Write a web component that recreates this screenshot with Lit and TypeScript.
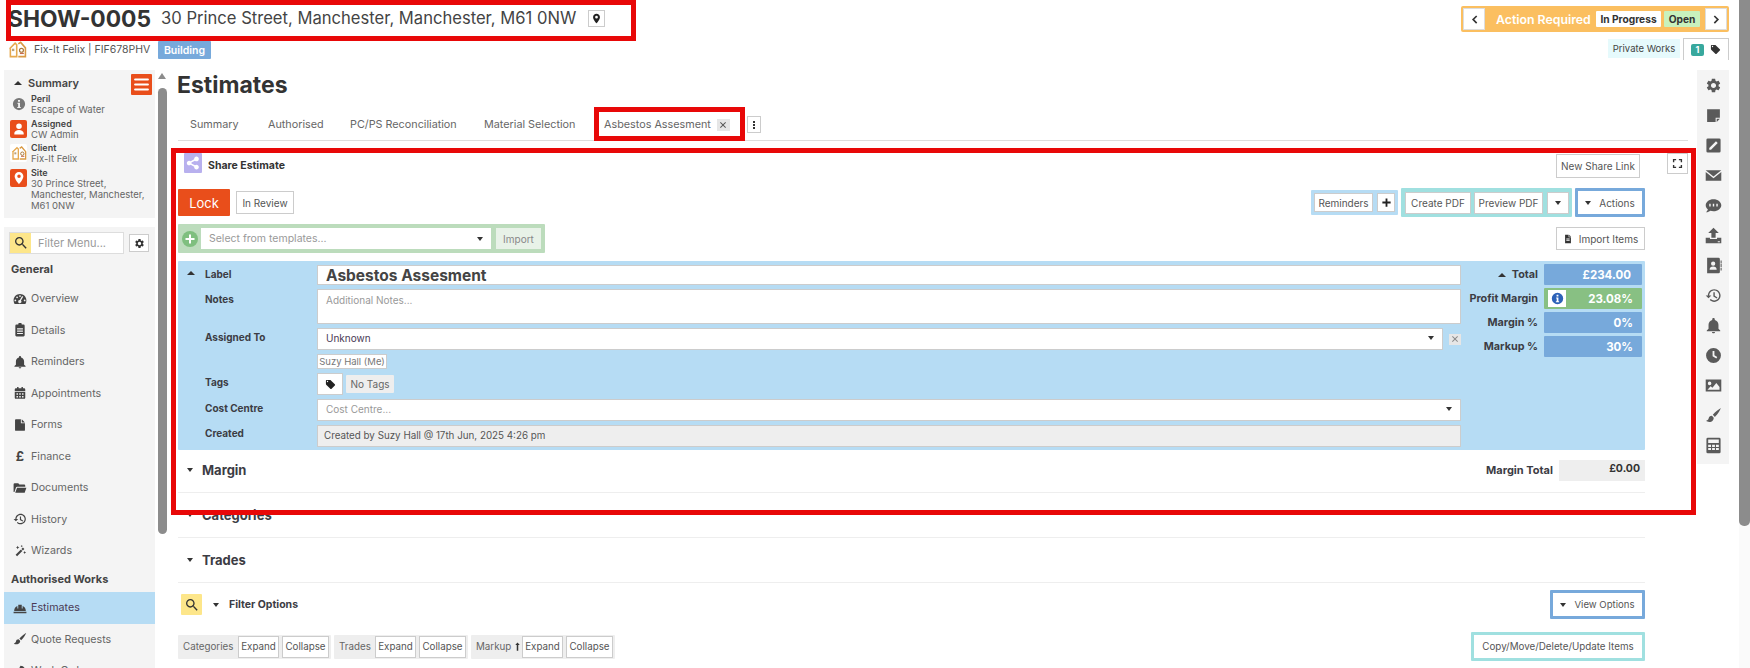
import { LitElement, html, css } from "lit";
import { customElement } from "lit/decorators.js";

const P: Record<string, string> = {
  gear: "M19.14 12.94c.04-.3.06-.61.06-.94 0-.32-.02-.64-.07-.94l2.03-1.58c.18-.14.23-.41.12-.61l-1.92-3.32c-.12-.22-.37-.29-.59-.22l-2.39.96c-.5-.38-1.03-.7-1.62-.94l-.36-2.54c-.04-.24-.24-.41-.48-.41h-3.84c-.24 0-.43.17-.47.41l-.36 2.54c-.59.24-1.13.57-1.62.94l-2.39-.96c-.22-.08-.47 0-.59.22L2.74 8.87c-.12.21-.08.47.12.61l2.03 1.58c-.05.3-.09.63-.09.94s.02.64.07.94l-2.03 1.58c-.18.14-.23.41-.12.61l1.92 3.32c.12.22.37.29.59.22l2.39-.96c.5.38 1.03.7 1.62.94l.36 2.54c.05.24.24.41.48.41h3.84c.24 0 .44-.17.47-.41l.36-2.54c.59-.24 1.13-.56 1.62-.94l2.39.96c.22.08.47 0 .59-.22l1.92-3.32c.12-.22.07-.47-.12-.61l-2.01-1.58zM12 15.6c-1.98 0-3.6-1.62-3.6-3.6s1.62-3.6 3.6-3.6 3.6 1.62 3.6 3.6-1.62 3.6-3.6 3.6z",
  search: "M15.5 14h-.79l-.28-.27C15.41 12.59 16 11.11 16 9.5 16 5.91 13.09 3 9.5 3S3 5.91 3 9.5 5.91 16 9.5 16c1.61 0 3.09-.59 4.23-1.57l.27.28v.79l5 4.99L20.49 19l-4.99-5zm-6 0C7.01 14 5 11.99 5 9.5S7.01 5 9.5 5 14 7.01 14 9.5 11.99 14 9.5 14z",
  bell: "M12 23c1.2 0 2.2-.9 2.2-2h-4.4c0 1.1 1 2 2.2 2zm7-6.5V11c0-3.4-2-6.2-5.2-6.9V3.3c0-1-.8-1.8-1.8-1.8s-1.8.8-1.8 1.8v.8C7 4.8 5 7.6 5 11v5.5L2.5 19v1h19v-1L19 16.5z",
  history: "M13 3c-4.97 0-9 4.03-9 9H1l3.89 3.89.07.14L9 12H6c0-3.87 3.13-7 7-7s7 3.13 7 7-3.13 7-7 7c-1.93 0-3.68-.79-4.94-2.06l-1.42 1.42C8.27 19.99 10.51 21 13 21c4.97 0 9-4.03 9-9s-4.03-9-9-9zm-1.2 4.5v6l4.8 2.9 1-1.6-3.8-2.3v-5z",
  folder: "M1 6a2 2 0 0 1 2-2h6l2 2h8a2 2 0 0 1 2 2v2H7a2 2 0 0 0-1.9 1.3L2.5 19H1zM7 11.5h16L20 20H3.8z",
  file: "M13.5 2H5a1.5 1.5 0 0 0-1.5 1.5v17A1.5 1.5 0 0 0 5 22h14a1.5 1.5 0 0 0 1.5-1.5V9h-7zM15 2v5.5h5.5z",
  cal: "M7 1.5h2.5V4h5V1.5H17V4h2a2 2 0 0 1 2 2v2.5H3V6a2 2 0 0 1 2-2h2zM3 10h18v10a2 2 0 0 1-2 2H5a2 2 0 0 1-2-2zm3 2.5V15h2.5v-2.5zm4.7 0V15h2.6v-2.5zm4.8 0V15H18v-2.5zM6 17v2.5h2.5V17zm4.7 0v2.5h2.6V17zm4.8 0v2.5H18V17z",
  clip: "M9 2.5a3 3 0 0 1 6 0h3a2 2 0 0 1 2 2V21a2 2 0 0 1-2 2H6a2 2 0 0 1-2-2V4.500a2 2 0 0 1 2-2zM7 9v2h10V9zm0 4v2h10v-2zm0 4v2h10v-2z",
  gauge: "M12 3.500C5.900 3.500 1 8.400 1 14.500c0 2.200.6 4.200 1.700 6h18.600c1.100-1.800 1.700-3.800 1.700-6 0-6.100-4.900-11-11-11zM4 13a1.500 1.500 0 1 1 0 3 1.500 1.500 0 0 1 0-3zM7 7.500a1.500 1.500 0 1 1 0 3 1.500 1.500 0 0 1 0-3zM12 5.500a1.500 1.500 0 1 1 0 3 1.500 1.500 0 0 1 0-3zM20 13a1.500 1.500 0 1 1 0 3 1.500 1.500 0 0 1 0-3zM17.500 8l-3.800 6.500a2.800 2.800 0 1 1-2-.9l3.900-6.600z",
  wand: "M17 6l2.500 2.500L7 21l-2.500-2.500zM13.500 9.500l2.500 2.500 1-1-2.500-2.500zM8 3l1 2 2 1-2 1-1 2-1-2-2-1 2-1zM20 12l.8 1.700 1.700.8-1.700.8-.8 1.700-.8-1.700-1.700-.8 1.700-.8zM15 1.500l.7 1.300 1.300.7-1.300.7-.7 1.300-.7-1.300-1.300-.7 1.300-.7z",
  hat: "M2 17c0-4 2.200-7 5.500-8.300V13H9V6.500h6V13h1.500V8.700C19.800 10 22 13 22 17zM1 18.500h22V21H1z",
  brush: "M22.500 1.500c-2 1-8 5.500-11.500 9.500l3 3c4-3.500 7.500-10 8.500-12.500zM9.700 12.500C7 12.500 5.500 14 5 16.500c-.3 1.500-2 2.500-3.500 3 2 2 7 2.500 9.500-.5 1.500-1.800 1.500-3.500.8-4.500z",
  hammer: "M13 3l4 1 4 4-2.500 2.500L17 9l-1.500 1.500L5 21l-2-2L13.500 8.500 11 6z",
  note: "M3 3h18v12h-6v6H3zM16.500 16.500V21l4.500-4.500z",
  edit: "M4 2h16a2 2 0 0 1 2 2v16a2 2 0 0 1-2 2H4a2 2 0 0 1-2-2V4a2 2 0 0 1 2-2zm11.500 4L6 15.500V18h2.500L18 8.500zM7 16",
  mail: "M1 4.500h22L12 13.500zM1 7l11 9 11-9v12.500H1z",
  sms: "M12 3C5.900 3 1 6.800 1 11.500c0 2.300 1.200 4.400 3 5.900-.2 1.400-1.200 3-2.500 4.100 2.500 0 4.700-1 6-2.200 1.300.4 2.900.7 4.500.7 6.100 0 11-3.800 11-8.500S18.100 3 12 3zM6 9.500h2v4H6zm5 0h2v4h-2zm5 0h2v4h-2z",
  upload: "M12 1l7.500 7.500H15V15H9V8.500H4.500zM1 15h6v2h10v-2h6v8H1zm17 5v1.500h3V20z",
  contact: "M3 1h16a2 2 0 0 1 2 2v18a2 2 0 0 1-2 2H3zm8.500 5.500a3 3 0 1 0 0 6 3 3 0 0 0 0-6zM6.500 18h10c0-2.800-2-4.500-5-4.500s-5 1.700-5 4.500zM22 5h1.500v4H22zm0 5h1.500v4H22zm0 5h1.500v4H22z",
  clock: "M12 1.500a10.500 10.500 0 1 0 0 21 10.500 10.500 0 0 0 0-21zM10.700 5.500h2.600v6l4 2.500-1.300 2.200-5.300-3.200z",
  image: "M1 3.500h22v17H1zM6.500 6.500a2.500 2.500 0 1 0 0 5 2.500 2.500 0 0 0 0-5zM3.500 18h17v-4L16 8.500 10.500 15 8 13z",
  calc: "M4 1h16a2 2 0 0 1 2 2v18a2 2 0 0 1-2 2H4a2 2 0 0 1-2-2V3a2 2 0 0 1 2-2zm.500 2.500v5h15v-5zm0 7.500v3h4v-3zm5.500 0v3h4v-3zm5.500 0v3h4v-3zm-11 4.500v3h4v-3zm5.500 0v3h4v-3zm5.500 0v3h4v-3z",
  person: "M12 2.500a4.800 4.800 0 1 0 0 9.600 4.800 4.800 0 0 0 0-9.600zM12 13.500c-4.400 0-8 2.400-8 5.500v2.500h16V19c0-3.100-3.600-5.500-8-5.500z",
  place: "M12 1.500C7.900 1.500 4.500 4.900 4.500 9c0 5.500 7.500 13.500 7.500 13.500S19.500 14.500 19.500 9c0-4.100-3.400-7.500-7.500-7.500zM12 6a3 3 0 1 1 0 6 3 3 0 0 1 0-6z",
  share: "M18 15c-1 0-1.900.4-2.600 1L9.300 12.700c.1-.2.100-.5.100-.7s0-.5-.1-.7L15.400 8c.7.6 1.600 1 2.600 1 2.200 0 4-1.800 4-4s-1.800-4-4-4-4 1.800-4 4c0 .2 0 .5.100.7L8 9c-.7-.6-1.600-1-2.600-1-2.200 0-4 1.800-4 4s1.800 4 4 4c1 0 1.900-.4 2.600-1l6.100 3.300c-.1.200-.1.500-.1.700 0 2.200 1.800 4 4 4s4-1.800 4-4-1.800-4-4-4z",
  tag: "M21.410 11.580l-9-9C12.050 2.220 11.550 2 11 2H4c-1.100 0-2 .9-2 2v7c0 .55.22 1.050.59 1.420l9 9c.36.36.86.58 1.410.58.55 0 1.050-.22 1.410-.59l7-7c.37-.36.59-.86.59-1.410 0-.55-.23-1.060-.59-1.420zM5.500 7C4.670 7 4 6.330 4 5.500S4.670 4 5.500 4 7 4.670 7 5.500 6.330 7 5.500 7z",
  info: "M12 1.500a10.500 10.500 0 1 0 0 21 10.500 10.500 0 0 0 0-21zM10.300 5h3.400v3.200h-3.400zM9.500 10h4.200v7h1.300v2H9v-2h1.500v-5h-1z",
  plus: "M10 3h4v7h7v4h-7v7h-4v-7H3v-4h7z",
  x: "M5 3l7 7 7-7 2 2-7 7 7 7-2 2-7-7-7 7-2-2 7-7-7-7z",
  expand: "M2 2h7v3H5v4H2zM15 2h7v7h-3V5h-4zM2 15h3v4h4v3H2zM19 15h3v7h-7v-3h4z",
  left: "M15.500 3L18 5.500 11.500 12l6.500 6.500-2.500 2.500-9-9z",
  right: "M8.500 3L6 5.500 12.500 12 6 18.500 8.500 21l9-9z",
  menu: "M3 3.500h18a1.500 1.500 0 0 1 0 3H3a1.500 1.500 0 0 1 0-3zM3 10.500h18a1.500 1.500 0 0 1 0 3H3a1.500 1.500 0 0 1 0-3zM3 17.500h18a1.500 1.500 0 0 1 0 3H3a1.500 1.500 0 0 1 0-3z",
  uparrow: "M12 1l6 7h-4v15h-4V8H6z",
  pdf: "M13.500 2H5v20h14V8h-5.500zM15 2v4.500h4.500zM8 11h8v2H8zm0 4h8v2H8z",
};

const icon = (n: string, cls = "") =>
  html`<svg class="i ${cls}" viewBox="0 0 24 24"><path fill-rule="evenodd" d=${P[n]}></path></svg>`;

const logo = (cls: string) => html`<svg class=${cls} viewBox="0 0 24 24" fill="none">
  <path d="M2 11 9 4l2 2v15H3V11" stroke="#e6a94e" stroke-width="2"></path>
  <path d="M13 5l3-2 6 7v11h-9" stroke="#d99a45" stroke-width="2"></path>
  <rect x="5" y="11" width="3" height="3" fill="#b9a27a"></rect>
  <circle cx="17" cy="13" r="2.500" stroke="#a9793a" stroke-width="1.500"></circle>
  <path d="M15 17h5" stroke="#c9694a" stroke-width="1.500"></path>
</svg>`;

@customElement("app-root")
export class AppRoot extends LitElement {
  static styles = css`
    :host { display: block; }
    * { box-sizing: border-box; }
    .page { position: relative; display: flex; width: 1750px; height: 668px; overflow: hidden; background: #fff;
      font-family: Inter, "Liberation Sans", sans-serif; font-size: 10.500px; color: #444; }
    .i { display: block; fill: currentColor; flex: none; }
    .content { width: 1739px; height: 668px; flex: none; display: flex; flex-direction: column; }
    .pagebar { width: 11px; height: 668px; background: #fafafa; }
    .pagebar div { height: 526px; background: #8c8c8c; border-radius: 0 0 5px 5px; }

    /* header */
    .top { height: 70px; flex: none; }
    .r1 { height: 36px; display: flex; align-items: center; justify-content: space-between; padding: 0 10px 0 8px; }
    .tleft { display: flex; align-items: center; }
    .code { font-size: 22.800px; font-weight: 700; color: #333; width: 153px; white-space: nowrap; }
    .addr { font-size: 16.600px; color: #444; width: 427px; white-space: nowrap; }
    .pin { width: 17px; height: 17px; border: 1px solid #ccc; display: flex; align-items: center; justify-content: center; color: #222; }
    .pin .i { width: 11px; height: 11px; }
    .action { width: 268px; height: 26px; background: #fbbf60; border-radius: 2px; display: flex; align-items: center; padding: 0 2px; margin-top: 2px; }
    .abtn { width: 22px; height: 22px; background: #fff; border: 1px solid #ddd; display: flex; align-items: center; justify-content: center; color: #333; flex: none; }
    .abtn .i { width: 11px; height: 11px; }
    .atitle { color: #fff; font-size: 12.300px; font-weight: 600; margin-left: 11px; white-space: nowrap; flex: none; width: 100px; }
    .ap { background: #fff; height: 16px; width: 65px; margin-right: 3px; font-weight: 700; color: #333; font-size: 10.200px; display: flex; align-items: center; justify-content: center; border-radius: 1px; flex: none; }
    .ao { background: #c8f1bd; width: 36px; margin-right: 5px; }
    .r2 { height: 26px; display: flex; justify-content: space-between; padding: 2px 10px 0 8px; }
    .client { display: flex; align-items: flex-start; }
    .clogo { width: 19px; height: 19px; margin-top: 2px; }
    .cname { width: 124px; margin-left: 7px; font-size: 10.500px; color: #555; margin-top: 5px; white-space: nowrap; }
    .bld { width: 53px; height: 18px; margin-top: 3px; background: #77a9db; color: #fff; font-weight: 600; font-size: 10.500px; display: flex; align-items: center; justify-content: center; border-radius: 1px; }
    .rt { display: flex; align-items: flex-start; }
    .pw { width: 72px; height: 19px; margin-top: 1px; background: #e6fafc; color: #444; font-size: 9.500px; display: flex; align-items: center; justify-content: center; margin-right: 3px; white-space: nowrap; }
    .ttab { width: 46px; height: 22px; border: 1px solid #ccc; border-bottom: 0; display: flex; align-items: center; justify-content: center; gap: 6px; color: #333; }
    .ttab .i { width: 11px; height: 11px; }
    .badge { width: 13px; height: 12px; background: #38a89d; color: #fff; font-size: 9px; font-weight: 700; display: flex; align-items: center; justify-content: center; border-radius: 2px; }

    .body { flex: 1; display: flex; min-height: 0; }

    /* left sidebar */
    .left { width: 155px; flex: none; padding-left: 4px; display: flex; flex-direction: column; gap: 9px; }
    .sum { height: 148px; background: #f4f4f4; position: relative; padding: 6px 0 0 6px; flex: none; }
    .sumh { display: flex; align-items: center; height: 14px; font-weight: 600; font-size: 11px; color: #444; }
    .sumh .up { margin: 0 6px 0 4px; }
    .hamb { position: absolute; right: 3px; top: 4px; width: 21px; height: 21px; background: #e94e1b; color: #fff; border-radius: 1px; display: flex; align-items: center; justify-content: center; }
    .hamb .i { width: 17px; height: 17px; }
    .sitem { display: flex; align-items: flex-start; margin-bottom: 2.500px; line-height: 11px; }
    .sitems { margin-top: 3px; }
    .sic { width: 17px; height: 18px; margin: 2px 4px 0 0; flex: none; border-radius: 2px; display: flex; align-items: center; justify-content: center; color: #fff; background: #e94e1b; }
    .sic .i { width: 14px; height: 14px; }
    .sic.plain { background: none; color: #777; }
    .sic.white { background: #fff; }
    .sic svg.lg { width: 16px; height: 16px; }
    .st { font-size: 9.500px; color: #666; white-space: nowrap; }
    .st b { display: block; color: #444; font-weight: 600; font-size: 9px; }
    .st span { display: block; line-height: 11px; }
    .menu { flex: 1; background: #f4f4f4; padding-top: 5px; min-height: 0; }
    .srow { height: 22px; display: flex; padding-left: 5px; align-items: center; }
    .sbox { width: 115px; height: 22px; border: 1px solid #ddd; background: #fff; display: flex; align-items: center; color: #999; font-size: 11px; }
    .sy { width: 21px; height: 20px; background: #fde68a; display: flex; align-items: center; justify-content: center; color: #333; margin-right: 7px; }
    .sy .i { width: 16px; height: 16px; }
    .sg { width: 20px; height: 18px; margin-left: 5px; background: #fff; border: 1px solid #ccc; display: flex; align-items: center; justify-content: center; color: #333; }
    .sg .i { width: 11px; height: 11px; }
    .mh { font-weight: 700; color: #444; font-size: 11px; padding-left: 7px; display: flex; align-items: center; white-space: nowrap; }
    .mh.a { height: 29px; }
    .mh.b { height: 25.500px; }
    .mi { height: 31.500px; display: flex; align-items: center; padding-left: 9px; color: #666; font-size: 10.700px; white-space: nowrap; }
    .mi .mic { width: 14px; height: 14px; margin-right: 4px; color: #444; flex: none; display: flex; align-items: center; justify-content: center; font-weight: 700; font-size: 13px; }
    .mi .mic .i { width: 14px; height: 14px; }
    .mi.on { background: #b6dcf4; color: #4a3a55; }

    .sb { width: 12px; flex: none; padding-left: 3px; }
    .sb .arrow { width: 0; height: 0; border: 4.500px solid transparent; border-top: 0; border-bottom: 6px solid #8c8c8c; margin-top: 3px; }
    .sb .th { width: 9px; height: 446px; margin-top: 9px; background: #8c8c8c; border-radius: 5px; }

    /* main */
    main { width: 1530px; flex: none; padding: 0 9px 0 11px; }
    h1 { margin: 0 0 0 -1px; height: 30px; font-size: 23px; font-weight: 700; color: #333; display: flex; align-items: center; }
    .tabs { height: 41px; padding-top: 8px; border-bottom: 1px solid #ddd; display: grid; grid-template-columns: 78px 82px 134px 120px 152px 20px; align-items: center; font-size: 10.800px; color: #666; }
    .tabs > div { padding-left: 12px; white-space: nowrap; }
    .tabs .cur { display: flex; align-items: center; height: 33px; }
    .tabx { width: 13px; height: 12px; margin-left: 6px; background: #e6e6e6; display: flex; align-items: center; justify-content: center; color: #555; }
    .tabx .i { width: 8px; height: 8px; }
    .tabs .more { width: 14px; height: 17px; padding: 0; margin-left: 3px; border: 1px solid #ccc; display: flex; flex-direction: column; align-items: center; justify-content: center; gap: 1px; }
    .more span { width: 2px; height: 2px; background: #333; }
    .inner { width: 1467px; }
    .sr { margin-top: 12px; height: 24px; display: flex; align-items: flex-start; position: relative; }
    .shic { width: 18px; height: 20px; margin: 0 6px; background: #b8b0ee; border-radius: 1px; display: flex; align-items: center; justify-content: center; color: #fff; }
    .shic .i { width: 14px; height: 14px; }
    .srt { font-weight: 700; color: #333; font-size: 10.500px; margin-top: 6px; flex: 1; }
    .btn { background: #fff; border: 1px solid #ccc; display: flex; align-items: center; justify-content: center; color: #555; font-size: 10px; white-space: nowrap; flex: none; }
    .nsl { width: 84px; height: 24px; margin: 1px 5px 0 0; }
    .fs { position: absolute; left: 1489px; top: 0; width: 21px; height: 21px; color: #333; }
    .fs .i { width: 11px; height: 11px; }
    .ar { margin-top: 11px; height: 29px; display: flex; align-items: center; }
    .lock { width: 52px; height: 27px; background: #e94e1b; color: #fff; font-size: 13px; font-weight: 400; display: flex; align-items: center; justify-content: center; border-radius: 1px; margin-right: 6px; }
    .rev { width: 58px; height: 23px; }
    .gap { flex: 1; }
    .g { display: flex; align-items: center; border-radius: 1px; }
    .g1 { width: 87px; height: 25px; background: #b6dcf4; padding-left: 3px; margin-right: 3px; gap: 4px; }
    .g1 .a { width: 59px; height: 19px; }
    .g1 .b { width: 18px; height: 19px; color: #222; }
    .g1 .b .i { width: 11px; height: 11px; }
    .g2 { width: 171px; height: 29px; background: #a0e0e0; padding-left: 4px; margin-right: 3px; }
    .g2 .a { width: 66px; height: 22px; margin-right: 3px; }
    .g2 .b { width: 69px; height: 22px; margin-right: 4px; }
    .g2 .c { width: 22px; height: 22px; }
    .g3 { width: 70px; height: 29px; border: 3px solid #77a9db; background: #fff; justify-content: center; gap: 8px; color: #555; font-size: 10px; }
    .caret { width: 0; height: 0; border: 3.500px solid transparent; border-top: 4px solid #333; border-bottom: 0; flex: none; display: block; }
    .caret.upc { border: 4px solid transparent; border-top: 0; border-bottom: 4px solid #333; }
    .tr { margin-top: 7px; height: 29px; display: flex; align-items: center; justify-content: space-between; }
    .tpl { width: 367px; height: 29px; background: #bcdcbc; display: flex; align-items: center; padding-left: 4px; border-radius: 1px; }
    .plusc { width: 16px; height: 16px; margin-right: 3px; color: #fff; background: #7fbf7f; border-radius: 50%; display: flex; align-items: center; justify-content: center; }
    .plusc .i { width: 12px; height: 12px; }
    .sel { background: #fff; display: flex; align-items: center; justify-content: space-between; padding: 0 8px; color: #999; font-size: 10.500px; }
    .tpl .sel { width: 290px; height: 21px; margin-right: 5px; }
    .imp { width: 45px; height: 21px; background: #e8f2e8; color: #888; font-size: 10px; display: flex; align-items: center; justify-content: center; }
    .impi { width: 89px; height: 23px; gap: 6px; }
    .impi .i { width: 10px; height: 10px; color: #333; }

    .panel { margin-top: 8px; height: 189px; background: #b6dcf4; display: flex; border-radius: 1px; }
    .form { width: 1283px; padding-top: 4px; display: grid; grid-template-columns: 139px 1144px; grid-auto-rows: auto; row-gap: 4px; align-content: start; }
    .lab { padding-left: 27px; font-weight: 700; font-size: 10px; color: #3c3c44; line-height: 12px; padding-top: 3px; position: relative; }
    .lab.n { padding-top: 4px; }
    .lab.u { padding-top: 2.500px; }
    .lab.v { padding-top: 2px; }
    .lab .caret { position: absolute; left: 9px; top: 6px; }
    .fld { background: #fff; border: 1px solid #ccc; display: flex; align-items: center; padding: 0 8px 2px; font-size: 10px; color: #999; }
    .h20 { height: 20px; } .h35 { height: 35px; align-items: flex-start; padding-top: 4px; } .h22 { height: 22px; }
    .name { font-size: 15.500px; font-weight: 700; color: #444; padding-bottom: 0; }
    .asg { display: flex; align-items: center; }
    .asg .fld { width: 1126px; color: #4a3a55; justify-content: space-between; }
    .xb { width: 12px; height: 11px; margin-left: 6px; background: #e6e6e6; color: #888; display: flex; align-items: center; justify-content: center; }
    .xb .i { width: 8px; height: 8px; }
    .chip { height: 15px; width: 70px; background: #fff; border: 1px solid #ccc; color: #777; font-size: 9.500px; display: flex; align-items: center; justify-content: center; white-space: nowrap; }
    .tagsr { display: flex; align-items: center; height: 22px; }
    .tagb { width: 26px; height: 22px; background: #fff; border: 1px solid #ccc; display: flex; align-items: center; justify-content: center; color: #222; margin-right: 3px; }
    .tagb .i { width: 11px; height: 11px; }
    .not { width: 48px; height: 18px; background: #eee; color: #666; font-size: 10px; display: flex; align-items: center; justify-content: center; border-radius: 1px; padding-bottom: 1px; }
    .sel2 { justify-content: space-between; }
    .cr { background: #eee; color: #555; padding-left: 6px; font-size: 9.800px; }
    .tot { width: 184px; padding: 3px 3px 0 0; display: grid; grid-template-columns: 77px 98px; column-gap: 6px; grid-auto-rows: 21px; row-gap: 3px; justify-content: end; }
    .tl { display: flex; align-items: center; justify-content: flex-end; font-weight: 700; font-size: 10.800px; color: #3c3c44; white-space: nowrap; }
    .tl .caret { margin-right: 6px; }
    .tv { background: #77a9db; color: #fff; font-weight: 700; font-size: 11.500px; display: flex; align-items: center; justify-content: flex-end; padding-right: 9px; border-radius: 1px; position: relative; }
    .tv.first { padding-right: 11px; }
    .tv.green { background: #88c083; justify-content: space-between; padding-left: 4px; }
    .infob { width: 18px; height: 17px; background: #fff; color: #2d62b8; display: flex; align-items: center; justify-content: center; }
    .infob .i { width: 13px; height: 13px; }

    .sec { display: flex; align-items: center; border-bottom: 1px solid #eee; height: 45px; padding-left: 9px; gap: 9px; font-size: 13px; font-weight: 700; color: #3c3c44; }
    .sec.m { height: 43px; padding-bottom: 2px; }
    .mt { margin-left: auto; display: flex; align-items: center; font-size: 11px; }
    .mtv { width: 86px; height: 21px; margin-left: 6px; background: #eee; display: flex; align-items: center; justify-content: flex-end; padding: 0 5px 3px 0; font-size: 10.500px; color: #333; }
    .fr { margin-top: 7px; height: 29px; display: flex; align-items: center; }
    .fy { width: 21px; height: 21px; margin-left: 3px; background: #fde68a; border-radius: 1px; display: flex; align-items: center; justify-content: center; color: #333; }
    .fy .i { width: 16px; height: 16px; }
    .fr > .caret { margin: 0 10px 0 11px; }
    .frt { font-weight: 700; font-size: 10.500px; color: #3c3c44; flex: 1; }
    .vo { width: 95px; height: 29px; border: 3px solid #77a9db; background: #fff; display: flex; align-items: center; justify-content: center; gap: 8px; font-size: 9.600px; color: #555; border-radius: 1px; white-space: nowrap; }
    .er { margin-top: 13px; height: 29px; display: flex; align-items: center; }
    .eg { height: 24px; background: #eee; display: flex; align-items: center; padding-left: 5px; margin-right: 3px; color: #666; font-size: 9.800px; border-radius: 1px; white-space: nowrap; }
    .eg .lbl { flex: none; }
    .eg .btn { height: 22px; font-size: 9.800px; }
    .eg.c1 { width: 153px; } .eg.c2 { width: 134px; } .eg.c3 { width: 144px; }
    .c1 .lbl { width: 55px; } .c2 .lbl { width: 36px; } .c3 .lbl { width: 46px; display: flex; align-items: center; gap: 2px; }
    .eg .ex { width: 41px; margin-right: 3px; }
    .eg .co { width: 47px; }
    .c3 .i { width: 9px; height: 11px; color: #333; }
    .cp { width: 174px; height: 29px; border: 3px solid #a0e0e0; background: #fff; font-size: 9.800px; color: #555; display: flex; align-items: center; justify-content: center; white-space: nowrap; border-radius: 1px; }

    /* right tools */
    .tools { width: 32px; height: 394px; background: #f4f4f4; flex: none; color: #5a5a5a; }
    .tools div { height: 30px; display: flex; align-items: center; justify-content: center; }
    .tools .i { width: 17px; height: 17px; }

    /* red annotation boxes */
    .red { position: absolute; border: 5px solid #e80808; pointer-events: none; }
    .red1 { left: 6px; top: 0; width: 630px; height: 41px; }
    .red2 { left: 594px; top: 107px; width: 151px; height: 34px; }
    .red3 { left: 171px; top: 148px; width: 1525px; height: 367px; }
  `;

  render() {
    const menu1: [string, string][] = [
      ["gauge", "Overview"], ["clip", "Details"], ["bell", "Reminders"], ["cal", "Appointments"], ["file", "Forms"],
      ["£", "Finance"], ["folder", "Documents"], ["history", "History"], ["wand", "Wizards"],
    ];
    const tools = ["gear", "note", "edit", "mail", "sms", "upload", "contact", "history", "bell", "clock", "image", "brush", "calc"];
    return html`<div class="page">
      <div class="content">
        <header class="top">
          <div class="r1">
            <div class="tleft">
              <div class="code">SHOW-0005</div>
              <div class="addr">30 Prince Street, Manchester, Manchester, M61 0NW</div>
              <div class="pin">${icon("place")}</div>
            </div>
            <div class="action">
              <div class="abtn">${icon("left")}</div>
              <div class="atitle">Action Required</div>
              <div class="ap">In Progress</div>
              <div class="ap ao">Open</div>
              <div class="abtn">${icon("right")}</div>
            </div>
          </div>
          <div class="r2">
            <div class="client">
              ${logo("clogo")}
              <div class="cname">Fix-It Felix | FIF678PHV</div>
              <div class="bld">Building</div>
            </div>
            <div class="rt">
              <div class="pw">Private Works</div>
              <div class="ttab"><span class="badge">1</span>${icon("tag")}</div>
            </div>
          </div>
        </header>
        <div class="body">
          <aside class="left">
            <section class="sum">
              <div class="sumh"><span class="caret upc up"></span>Summary</div>
              <div class="hamb">${icon("menu")}</div>
              <div class="sitems">
                <div class="sitem"><div class="sic plain">${icon("info")}</div><div class="st"><b>Peril</b><span>Escape of Water</span></div></div>
                <div class="sitem"><div class="sic">${icon("person")}</div><div class="st"><b>Assigned</b><span>CW Admin</span></div></div>
                <div class="sitem"><div class="sic white">${logo("lg")}</div><div class="st"><b>Client</b><span>Fix-It Felix</span></div></div>
                <div class="sitem"><div class="sic">${icon("place")}</div><div class="st"><b>Site</b><span>30 Prince Street,</span><span>Manchester, Manchester,</span><span>M61 0NW</span></div></div>
              </div>
            </section>
            <nav class="menu">
              <div class="srow">
                <div class="sbox"><div class="sy">${icon("search")}</div>Filter Menu...</div>
                <div class="sg">${icon("gear")}</div>
              </div>
              <div class="mh a">General</div>
              ${menu1.map(([ic, t]) => html`<div class="mi"><span class="mic">${ic === "£" ? "£" : icon(ic)}</span>${t}</div>`)}
              <div class="mh b">Authorised Works</div>
              <div class="mi on"><span class="mic">${icon("hat")}</span>Estimates</div>
              <div class="mi"><span class="mic">${icon("brush")}</span>Quote Requests</div>
              <div class="mi"><span class="mic">${icon("hammer")}</span>Work Orders</div>
            </nav>
          </aside>
          <div class="sb"><div class="arrow"></div><div class="th"></div></div>
          <main>
            <h1>Estimates</h1>
            <div class="tabs">
              <div>Summary</div><div>Authorised</div><div>PC/PS Reconciliation</div><div>Material Selection</div>
              <div class="cur">Asbestos Assesment<span class="tabx">${icon("x")}</span></div>
              <div class="more"><span></span><span></span><span></span></div>
            </div>
            <div class="inner">
              <div class="sr">
                <div class="shic">${icon("share")}</div>
                <div class="srt">Share Estimate</div>
                <div class="btn nsl">New Share Link</div>
                <div class="btn fs">${icon("expand")}</div>
              </div>
              <div class="ar">
                <div class="lock">Lock</div>
                <div class="btn rev">In Review</div>
                <div class="gap"></div>
                <div class="g g1"><div class="btn a">Reminders</div><div class="btn b">${icon("plus")}</div></div>
                <div class="g g2"><div class="btn a">Create PDF</div><div class="btn b">Preview PDF</div><div class="btn c"><span class="caret"></span></div></div>
                <div class="g g3"><span class="caret"></span>Actions</div>
              </div>
              <div class="tr">
                <div class="tpl">
                  <div class="plusc">${icon("plus")}</div>
                  <div class="sel">Select from templates...<span class="caret"></span></div>
                  <div class="imp">Import</div>
                </div>
                <div class="btn impi">${icon("pdf")}Import Items</div>
              </div>
              <div class="panel">
                <div class="form">
                  <div class="lab"><span class="caret upc"></span>Label</div>
                  <div class="fld h20 name">Asbestos Assesment</div>
                  <div class="lab n">Notes</div>
                  <div class="fld h35">Additional Notes...</div>
                  <div class="lab u">Assigned To</div>
                  <div class="asg"><div class="fld h22">Unknown<span class="caret"></span></div><div class="xb">${icon("x")}</div></div>
                  <div></div>
                  <div class="chip">Suzy Hall (Me)</div>
                  <div class="lab u">Tags</div>
                  <div class="tagsr"><div class="tagb">${icon("tag")}</div><div class="not">No Tags</div></div>
                  <div class="lab u">Cost Centre</div>
                  <div class="fld h22 sel2">Cost Centre...<span class="caret"></span></div>
                  <div class="lab v">Created</div>
                  <div class="fld h22 cr">Created by Suzy Hall @ 17th Jun, 2025 4:26 pm</div>
                </div>
                <div class="tot">
                  <div class="tl"><span class="caret upc"></span>Total</div><div class="tv first">£234.00</div>
                  <div class="tl">Profit Margin</div><div class="tv green"><span class="infob">${icon("info")}</span>23.08%</div>
                  <div class="tl">Margin %</div><div class="tv">0%</div>
                  <div class="tl">Markup %</div><div class="tv">30%</div>
                </div>
              </div>
              <div class="sec m"><span class="caret"></span>Margin
                <div class="mt">Margin Total<div class="mtv">£0.00</div></div>
              </div>
              <div class="sec"><span class="caret"></span>Categories</div>
              <div class="sec"><span class="caret"></span>Trades</div>
              <div class="fr">
                <div class="fy">${icon("search")}</div>
                <span class="caret"></span>
                <div class="frt">Filter Options</div>
                <div class="vo"><span class="caret"></span>View Options</div>
              </div>
              <div class="er">
                <div class="eg c1"><span class="lbl">Categories</span><div class="btn ex">Expand</div><div class="btn co">Collapse</div></div>
                <div class="eg c2"><span class="lbl">Trades</span><div class="btn ex">Expand</div><div class="btn co">Collapse</div></div>
                <div class="eg c3"><span class="lbl">Markup${icon("uparrow")}</span><div class="btn ex">Expand</div><div class="btn co">Collapse</div></div>
                <div class="gap"></div>
                <div class="cp">Copy/Move/Delete/Update Items</div>
              </div>
            </div>
          </main>
          <aside class="tools">${tools.map((t) => html`<div>${icon(t)}</div>`)}</aside>
        </div>
      </div>
      <div class="pagebar"><div></div></div>
      <div class="red red1"></div>
      <div class="red red2"></div>
      <div class="red red3"></div>
    </div>`;
  }
}
